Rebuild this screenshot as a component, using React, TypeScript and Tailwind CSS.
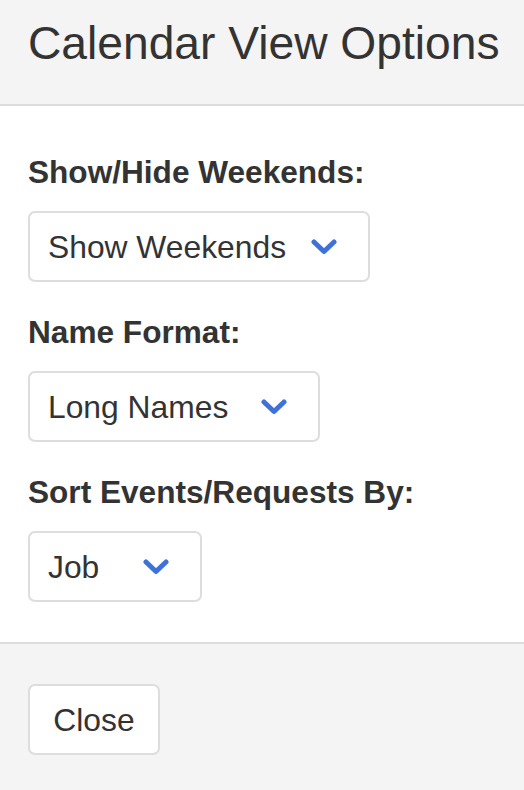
import React from "react";

const Chevron = () => (
  <svg width="26" height="16" viewBox="0 0 26 16" fill="none">
    <polyline
      points="3,3 13,12.5 23,3"
      stroke="#3f72d9"
      strokeWidth="5"
      strokeLinecap="round"
      strokeLinejoin="round"
    />
  </svg>
);

type SelectProps = { value: string; width: string };

const FakeSelect = ({ value, width }: SelectProps) => {
  return (
    <div
      className={`${width} h-[71px] mt-[23px] flex items-center justify-between pl-[18px] pr-[31px] bg-white border-2 border-[#dddddd] rounded-[7px]`}
    >
      <span className="mt-[2px] text-[31.8px] leading-none text-[#333333]">{value}</span>
      <Chevron />
    </div>
  );
};

const App = () => {
  return (
    <div className="w-[524px] min-h-[790px] bg-[#f4f4f4] font-['Liberation_Sans',Arial,sans-serif] text-[#333333]">
      <div className="h-[106px] border-b-2 border-[#dddddd] pt-[20px] pl-[28px]">
        <h1 className="text-[46.2px] leading-[46px] font-normal whitespace-nowrap">
          Calendar View Options
        </h1>
      </div>

      <div className="bg-white pt-[50px] pl-[28px] pb-[40px] border-b-2 border-[#dddddd]">
        <div className="text-[31.6px] leading-[32px] font-bold">Show/Hide Weekends:</div>
        <FakeSelect value="Show Weekends" width="w-[342px]" />

        <div className="mt-[34px] text-[31.6px] leading-[32px] font-bold">Name Format:</div>
        <FakeSelect value="Long Names" width="w-[292px]" />

        <div className="mt-[34px] text-[31.6px] leading-[32px] font-bold">
          Sort Events/Requests By:
        </div>
        <FakeSelect value="Job" width="w-[174px]" />
      </div>

      <div className="pt-[40px] pl-[28px] pb-[36px]">
        <button className="w-[132px] h-[71px] pt-[3px] bg-white border-2 border-[#dddddd] rounded-[7px] text-[31.8px] leading-none text-[#333333]">
          Close
        </button>
      </div>
    </div>
  );
};

export default App;
